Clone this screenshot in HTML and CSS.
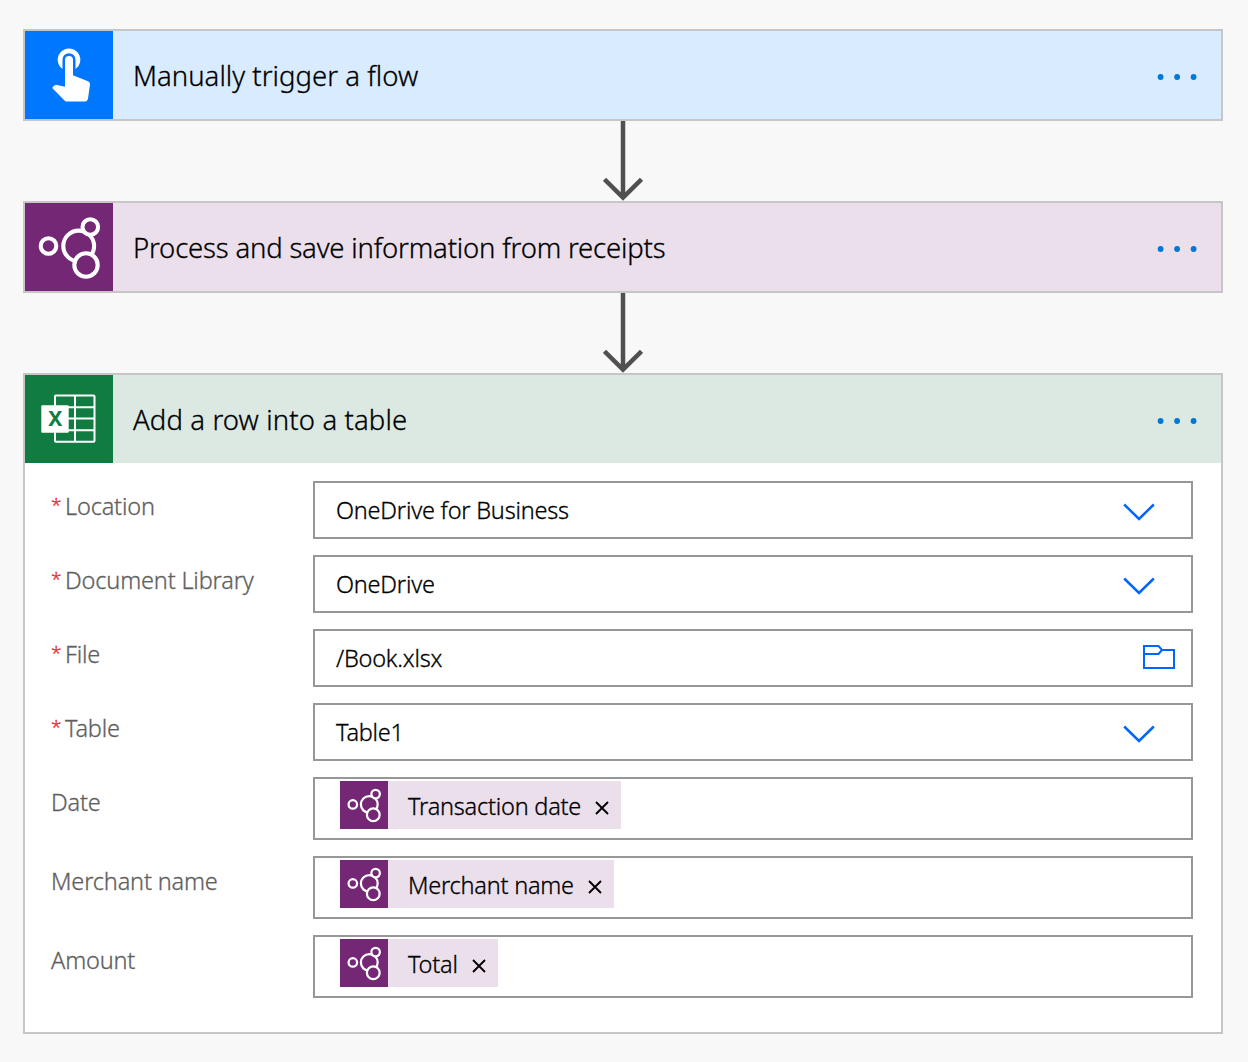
FILE: index.html
```
<!DOCTYPE html>
<html lang="en">
<head>
<meta charset="utf-8">
<title>Receipt flow</title>
<link rel="stylesheet" href="styles.css">
</head>
<body>
<svg class="defs" width="0" height="0" aria-hidden="true">
  <symbol id="nodes" viewBox="0 0 88 88">
    <g fill="#742774" stroke="#fff" stroke-width="4.100">
      <circle cx="23.500" cy="43" r="7.800"/>
      <circle cx="53.700" cy="43" r="15.400"/>
      <circle cx="65.300" cy="24" r="7.800"/>
      <circle cx="61" cy="62" r="11.700"/>
    </g>
  </symbol>
  <symbol id="dots" viewBox="0 0 40 8">
    <g fill="#0078d7"><circle cx="3.600" cy="4" r="2.900"/><circle cx="20.100" cy="4" r="2.900"/><circle cx="36.600" cy="4" r="2.900"/></g>
  </symbol>
  <symbol id="arrow" viewBox="0 0 40 80">
    <path d="M20 0V76M1.500 58.300L20 76.700L38.500 58.300" fill="none" stroke="#505050" stroke-width="4.500"/>
  </symbol>
  <symbol id="chevron" viewBox="0 0 32 18">
    <path d="M1.200 1.500L16 16L30.800 1.500" fill="none" stroke="#0066ff" stroke-width="2.500"/>
  </symbol>
  <symbol id="cross" viewBox="0 0 14 14">
    <path d="M1 1L13 13M13 1L1 13" fill="none" stroke="#000" stroke-width="1.900"/>
  </symbol>
</svg>
<main class="flow">
  <section class="card">
    <header class="head head-trigger">
      <svg class="tile" viewBox="0 0 88 88">
        <rect width="88" height="88" fill="#0077ff"/>
        <path fill="#fff" d="M37.500 38A11.300 11.300 0 1 1 50.500 38V28.700A6.500 6.500 0 0 0 37.500 28.700Z"/>
        <path fill="#fff" d="M40 29a4 4 0 0 1 8 0V44.300L63 50.300Q65.200 51.300 65 53.500L63 67.500Q62.500 70.600 59.500 70.600H42.500Q40.700 70.600 39.500 69.400L27.200 57Q28.800 54 31 53.700L40 55.700Z"/>
      </svg>
      <h2 class="title title-a">Manually trigger a flow</h2>
      <svg class="dots"><use href="#dots"/></svg>
    </header>
  </section>
  <svg class="arrow"><use href="#arrow"/></svg>
  <section class="card">
    <header class="head head-process">
      <svg class="tile tile-nodes"><use href="#nodes"/></svg>
      <h2 class="title title-b">Process and save information from receipts</h2>
      <svg class="dots"><use href="#dots"/></svg>
    </header>
  </section>
  <svg class="arrow"><use href="#arrow"/></svg>
  <section class="card">
    <header class="head head-excel">
      <svg class="tile" viewBox="0 0 88 88">
        <rect width="88" height="88" fill="#107c41"/>
        <g fill="none" stroke="#fff" stroke-width="2">
          <rect x="30" y="20.500" width="39.500" height="46.300" rx="1"/>
          <path d="M50 20V67M30 32.300H69.500M30 43.500H69.500M30 55.300H69.500"/>
        </g>
        <rect x="16.300" y="30.300" width="27.400" height="27.400" rx="1" fill="#fff"/>
        <text class="xl" x="30.300" y="51.300" text-anchor="middle">X</text>
      </svg>
      <h2 class="title title-c">Add a row into a table</h2>
      <svg class="dots"><use href="#dots"/></svg>
    </header>
    <div class="fields">
      <div class="row"><div class="label"><span class="req">*</span>Location</div><div class="input"><span>OneDrive for Business</span><svg class="chevron"><use href="#chevron"/></svg></div></div>
      <div class="row"><div class="label"><span class="req">*</span>Document Library</div><div class="input"><span>OneDrive</span><svg class="chevron"><use href="#chevron"/></svg></div></div>
      <div class="row"><div class="label"><span class="req">*</span>File</div><div class="input"><span>/Book.xlsx</span><svg class="folder" viewBox="0 0 32 24"><path d="M1 1H15.500L19 5H31V23H1ZM1 9H15.500L19 5" fill="none" stroke="#0066ff" stroke-width="2"/></svg></div></div>
      <div class="row"><div class="label"><span class="req">*</span>Table</div><div class="input"><span>Table1</span><svg class="chevron"><use href="#chevron"/></svg></div></div>
      <div class="row"><div class="label">Date</div><div class="input tokens"><div class="token"><svg class="mini"><use href="#nodes"/></svg><span>Transaction date</span><svg class="cross"><use href="#cross"/></svg></div></div></div>
      <div class="row"><div class="label">Merchant name</div><div class="input tokens"><div class="token"><svg class="mini"><use href="#nodes"/></svg><span>Merchant name</span><svg class="cross"><use href="#cross"/></svg></div></div></div>
      <div class="row"><div class="label">Amount</div><div class="input tokens"><div class="token"><svg class="mini"><use href="#nodes"/></svg><span>Total</span><svg class="cross"><use href="#cross"/></svg></div></div></div>
    </div>
  </section>
</main>
</body>
</html>
```
FILE: styles.css
```
* { box-sizing: border-box; }
body {
  margin: 0;
  min-height: 1062px;
  background: #f8f8f8;
  font-family: "Noto Sans", "Open Sans", sans-serif;
  font-weight: 300;
  -webkit-text-stroke: 0.3px;
  color: #000;
}
svg { display: block; flex: none; }
.defs { position: absolute; }
.flow {
  width: 1200px;
  margin-left: 23px;
  padding-top: 29px;
  display: flex;
  flex-direction: column;
}
.card { border: 2px solid #c6c6c6; background: #fff; }
.head {
  height: 88px;
  display: flex;
  align-items: center;
  padding-right: 24px;
}
.head-trigger { background: #d9ebff; }
.head-process { background: #ebdfeb; }
.head-excel { background: #dbe9e2; }
.tile { width: 88px; height: 88px; }
.tile-nodes, .mini { background: #742774; }
.xl { font-weight: 700; font-size: 21px; fill: #107c41; -webkit-text-stroke: 0; }
.title {
  flex: 1;
  margin: 0 0 0 20px;
  padding-top: 1px;
  font-size: 27.5px;
  font-weight: 300;
  line-height: 40px;
  white-space: nowrap;
}
.title-a { letter-spacing: 0.03px; }
.title-b { letter-spacing: -0.19px; }
.title-c { letter-spacing: 0.12px; }
.dots { width: 40px; height: 8px; margin-top: 4px; }
.arrow { width: 40px; height: 80px; margin-left: 580px; }
.fields {
  display: flex;
  flex-direction: column;
  gap: 16px;
  padding: 18px 28px 34px 26px;
  font-size: 23.5px;
}
.row { display: flex; align-items: flex-start; }
.label {
  width: 262px;
  padding-top: 9px;
  line-height: 32px;
  white-space: nowrap;
  color: #5f5f5f;
  letter-spacing: -0.16px;
}
.req {
  display: inline-block;
  width: 14px;
  line-height: 20px;
  transform: translateY(-3px);
  color: #e0302f;
  font-size: 19px;
  letter-spacing: 0;
}
.input {
  width: 880px;
  height: 58px;
  border: 2px solid #979797;
  display: flex;
  align-items: center;
  justify-content: space-between;
  padding: 0 36px 0 21px;
  line-height: 32px;
  letter-spacing: -0.22px;
}
.chevron { width: 32px; height: 18px; margin-top: 3px; }
.folder { width: 32px; height: 24px; margin-right: -20px; margin-bottom: 2px; }
.tokens { height: 63px; align-items: flex-start; justify-content: flex-start; padding: 2px 0 0 25px; }
.token { height: 48px; display: flex; align-items: center; background: #ebdfeb; padding-right: 12px; }
.token span { margin: 1px 14px 0 20px; }
.mini { width: 48px; height: 48px; }
.cross { width: 14px; height: 14px; margin-top: 6px; }
```
